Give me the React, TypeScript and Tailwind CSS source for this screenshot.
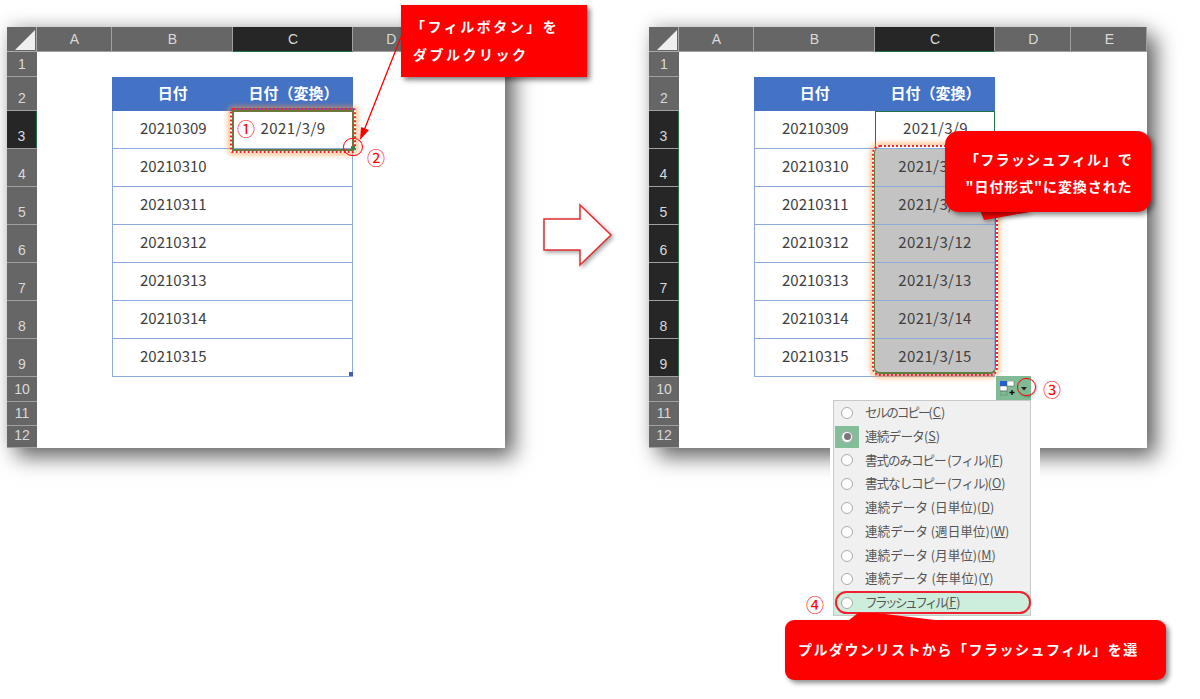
import React from 'react';

const COLS = ['A', 'B', 'C', 'D', 'E'];
const ROWS = [1, 2, 3, 4, 5, 6, 7, 8, 9, 10, 11, 12];
const SOURCE = ['20210309', '20210310', '20210311', '20210312', '20210313', '20210314', '20210315'];
const CONVERTED = ['2021/3/9', '2021/3/10', '2021/3/11', '2021/3/12', '2021/3/13', '2021/3/14', '2021/3/15'];

// tracking: the menu font in the picture has narrow kana, so kana-heavy labels are squeezed
const MENU_ITEMS = [
  { label: 'セルのコピー', key: 'C', tracking: 'tracking-[-2px]' },
  { label: '連続データ', key: 'S', selected: true, tracking: 'tracking-[-0.8px]' },
  { label: '書式のみコピー (フィル)', key: 'F', tracking: 'tracking-[-1.1px]' },
  { label: '書式なしコピー (フィル)', key: 'O', tracking: 'tracking-[-1.1px]' },
  { label: '連続データ (日単位)', key: 'D', tracking: '' },
  { label: '連続データ (週日単位)', key: 'W', tracking: '' },
  { label: '連続データ (月単位)', key: 'M', tracking: '' },
  { label: '連続データ (年単位)', key: 'Y', tracking: 'tracking-[0.1px]' },
  { label: 'フラッシュ フィル', key: 'F', active: true, tracking: 'tracking-[-2.6px]' },
];

const Sheet: React.FC<{ className: string; converted: boolean }> = ({ className, converted }) => {
  const rowDark = (r: number) => (converted ? r >= 3 && r <= 9 : r === 3);

  return (
    <div className={`absolute w-[498px] h-[421px] bg-white shadow-[9px_9px_20px_rgba(0,0,0,0.6),0_-5px_14px_rgba(0,0,0,0.1)] overflow-hidden ${className}`}>
      <div className="grid grid-cols-[30px_75px_120.7px_120.7px_76px_76px] grid-rows-[25px_25px_34px_38px_38px_38px_38px_38px_38px_38px_25px_24px_22px] text-[#d9d9d9] text-[14px] font-['Liberation_Sans',sans-serif]">
        {/* header row */}
        <div className="bg-[#666] border-r border-b border-[#aaa] relative">
          <svg className="absolute inset-0" width="30" height="25" viewBox="0 0 30 25">
            <polygon points="8,23 28,3 28,23" fill="#efefef" />
          </svg>
        </div>
        {COLS.map((c) => (
          <div
            key={c}
            className={`flex items-center justify-center pl-[1px] border-r border-b border-[#a0a0a0] ${
              c === 'C' ? 'bg-[#262626] border-b-[#217346]' : 'bg-[#666]'
            }`}
          >
            {/* E of the left sheet sits behind the callout */}
            {c === 'E' && !converted ? '' : c}
          </div>
        ))}

        {ROWS.map((r) => (
          <React.Fragment key={r}>
            <div
              className={`flex items-end justify-center pb-[1px] border-b border-[#a0a0a0] ${
                rowDark(r) ? 'bg-[#262626] border-r border-r-[#217346]' : 'bg-[#666]'
              }`}
            >
              {r}
            </div>
            <div />
            {r === 2 && (
              <>
                <div className="bg-[#4472c4] text-white font-bold flex items-center justify-center text-[15px] font-['Noto_Sans_CJK_JP',sans-serif] pb-[2px] pl-[1px]">日付</div>
                <div className="bg-[#4472c4] text-white font-bold flex items-center justify-center text-[15px] font-['Noto_Sans_CJK_JP',sans-serif] pb-[2px] pl-[1px]">日付（変換）</div>
              </>
            )}
            {r >= 3 && r <= 9 && (
              <>
                <div className="border-l border-b border-[#8eaadb] flex items-center justify-center text-[#404040] text-[15px] font-['Noto_Sans_CJK_JP',sans-serif] pb-[3px] pl-[1px]">
                  {SOURCE[r - 3]}
                </div>
                <div
                  className={`border-r border-b border-[#8eaadb] flex items-center justify-center text-[#404040] text-[15px] tracking-[0.4px] font-['Noto_Sans_CJK_JP',sans-serif] pb-[3px] pl-[1px] ${
                    converted && r > 3 ? 'bg-[#c3c3c3]' : ''
                  } ${converted && r === 3 ? 'border-[#217346] border-l border-t border-b-[#8eaadb]' : ''}`}
                >
                  {converted ? CONVERTED[r - 3] : r === 3 ? CONVERTED[0] : ''}
                </div>
              </>
            )}
            {(r === 1 || r >= 10) && (
              <>
                <div />
                <div />
              </>
            )}
            <div />
            <div />
          </React.Fragment>
        ))}
      </div>
    </div>
  );
};

const Num: React.FC<{ className: string; children: React.ReactNode }> = ({ className, children }) => (
  <span className={`absolute text-[#ff0000] text-[18px] leading-none font-['Noto_Sans_CJK_JP',sans-serif] ${className}`}>{children}</span>
);

export default function App() {
  return (
    <div className="relative w-[1200px] h-[699px] overflow-hidden bg-white font-['Noto_Sans_CJK_JP','Liberation_Sans',sans-serif]">
      <Sheet className="left-[7px] top-[27px]" converted={false} />
      <Sheet className="left-[649px] top-[27px]" converted />

      {/* left sheet annotations */}
      <div className="absolute left-[230px] top-[108px] w-[126px] h-[45px] rounded-[3px] border-2 border-dotted border-[#ff2020] shadow-[0_0_5px_2px_rgba(255,150,60,0.6)]">
        <div className="w-full h-full border-2 border-[#6b7a3a]" />
      </div>
      <Num className="left-[237px] top-[119px]">①</Num>
      <div className="absolute left-[351px] top-[146px] w-[4px] h-[4px] bg-[#3f7f3f]" />
      <div className="absolute left-[343px] top-[138px] w-[20px] h-[18px] rounded-full border-[1.5px] border-[#ff0000]" />
      <Num className="left-[367px] top-[148px]">②</Num>
      <div className="absolute left-[349px] top-[372px] w-[4px] h-[4px] bg-[#3a5fc0]" />

      <div className="absolute left-[401px] top-[5px] w-[186px] h-[72px] bg-[#ff0000] shadow-[3px_3px_5px_rgba(0,0,0,0.5)] text-white font-bold text-[14px] tracking-[2.5px] leading-[28px] pt-[7px]">
        <div className="pl-[10px]">「フィルボタン」を</div>
        <div className="pl-[12px]">ダブルクリック</div>
      </div>
      <svg className="absolute left-[350px] top-[30px]" width="60" height="125" viewBox="0 0 60 125">
        <line x1="51" y1="7" x2="13" y2="103" stroke="#ff0000" strokeWidth="1.3" />
        <polygon points="10,110 11,97 19,100" fill="#ff0000" />
      </svg>

      {/* big arrow between the sheets */}
      <svg className="absolute left-[538px] top-[200px]" width="80" height="72" viewBox="0 0 80 72">
        <polygon points="6,19 42,19 42,5 73,35 42,65 42,50 6,50" fill="white" stroke="#e03030" strokeWidth="1.5" style={{ filter: 'drop-shadow(2px 2px 2px rgba(0,0,0,0.35))' }} />
      </svg>

      {/* right sheet annotations */}
      <div className="absolute left-[872px] top-[145px] w-[126px] h-[231px] rounded-[8px] border-2 border-dotted border-[#ff2020] shadow-[0_0_5px_2px_rgba(255,150,60,0.6)]">
        <div className="w-full h-full border-l border-r border-b-2 border-[#5f7f3f] rounded-[6px]" />
      </div>

      <svg className="absolute left-[970px] top-[205px]" width="64" height="20" viewBox="0 0 64 20" style={{ filter: 'drop-shadow(2px 2px 2px rgba(0,0,0,0.35))' }}>
        <polygon points="10,5 14,15 60,7 60,5" fill="#ff0000" />
      </svg>
      <div className="absolute left-[945px] top-[131px] w-[206px] h-[81px] rounded-[14px] bg-[#ff0000] shadow-[3px_3px_5px_rgba(0,0,0,0.45)] text-white font-bold text-[14px] text-center leading-[27px] pt-[15px]">
        <div className="tracking-[1.3px] pl-[2px]">「フラッシュフィル」で</div>
        <div className="tracking-[0.9px] pl-[2px]">"日付形式"に変換された</div>
      </div>

      {/* auto fill options menu */}
      <div className="absolute left-[833px] top-[400px] w-[198px] h-[216px] bg-[#f0f0f0] border border-[#c8c8c8] shadow-[3px_0_0_6px_white] flex flex-col text-[#555] text-[12.6px] font-['Noto_Sans_CJK_JP',sans-serif]">
        {MENU_ITEMS.map((item) => (
          <div key={item.label + item.key} className={`flex-1 flex items-center ${item.active ? 'bg-[#cdeedd]' : ''}`}>
            <div className={`ml-[1px] w-[24px] h-[22px] flex items-center justify-center ${item.selected ? 'bg-[#84bd99]' : ''}`}>
              <div className="w-[12px] h-[12px] rounded-full bg-white border border-[#aaa] flex items-center justify-center">
                {item.selected && <div className="w-[7px] h-[7px] rounded-full bg-[#777]" />}
              </div>
            </div>
            <span className="ml-[6px] pb-[1px] whitespace-pre">
              <span className={item.tracking}>{item.label}</span>(
              <span className="underline">{item.key}</span>)
            </span>
          </div>
        ))}
      </div>
      <div className="absolute left-[835px] top-[591px] w-[196px] h-[23px] rounded-[12px] border-2 border-[#f02030]" />

      {/* fill options button */}
      <div className="absolute left-[996px] top-[376px] w-[35px] h-[24px] bg-[#80bb96]">
        <svg className="absolute left-[4px] top-[5px]" width="17" height="15" viewBox="0 0 17 15">
          <rect x="0" y="0" width="7" height="5" fill="#1f5fd8" />
          <rect x="7" y="0" width="7" height="5" fill="white" stroke="#555" strokeWidth="0.5" />
          <rect x="0" y="5" width="7" height="5" fill="white" stroke="#555" strokeWidth="0.5" />
          <rect x="0" y="10" width="7" height="4" fill="none" stroke="#4d7d60" strokeWidth="0.5" />
          <path d="M12 9v5M9.5 11.5h5" stroke="#111" strokeWidth="1.4" />
        </svg>
        <svg className="absolute left-[25px] top-[11px]" width="7" height="4" viewBox="0 0 7 4">
          <polygon points="0,0 6,0 3,3.5" fill="#222" />
        </svg>
      </div>
      <div className="absolute left-[1017px] top-[378px] w-[19px] h-[18px] rounded-full border-[1.5px] border-[#ff0000] shadow-[1px_1px_2px_rgba(0,0,0,0.3)]" />
      <Num className="left-[1043px] top-[380px]">③</Num>
      <Num className="left-[806px] top-[595px]">④</Num>

      <svg className="absolute left-[845px] top-[611px]" width="102" height="11" viewBox="0 0 102 11">
        <polygon points="3,10 13,2 32,2 98,10" fill="#ff0000" />
      </svg>
      <div className="absolute left-[785px] top-[620px] w-[381px] h-[60px] rounded-[9px] bg-[#ff0000] shadow-[3px_3px_5px_rgba(0,0,0,0.45)] text-white font-bold text-[14px] tracking-[1.5px] whitespace-nowrap overflow-hidden flex items-center pl-[13px] pb-[2px]">
        プルダウンリストから「フラッシュフィル」を選
      </div>
    </div>
  );
}
